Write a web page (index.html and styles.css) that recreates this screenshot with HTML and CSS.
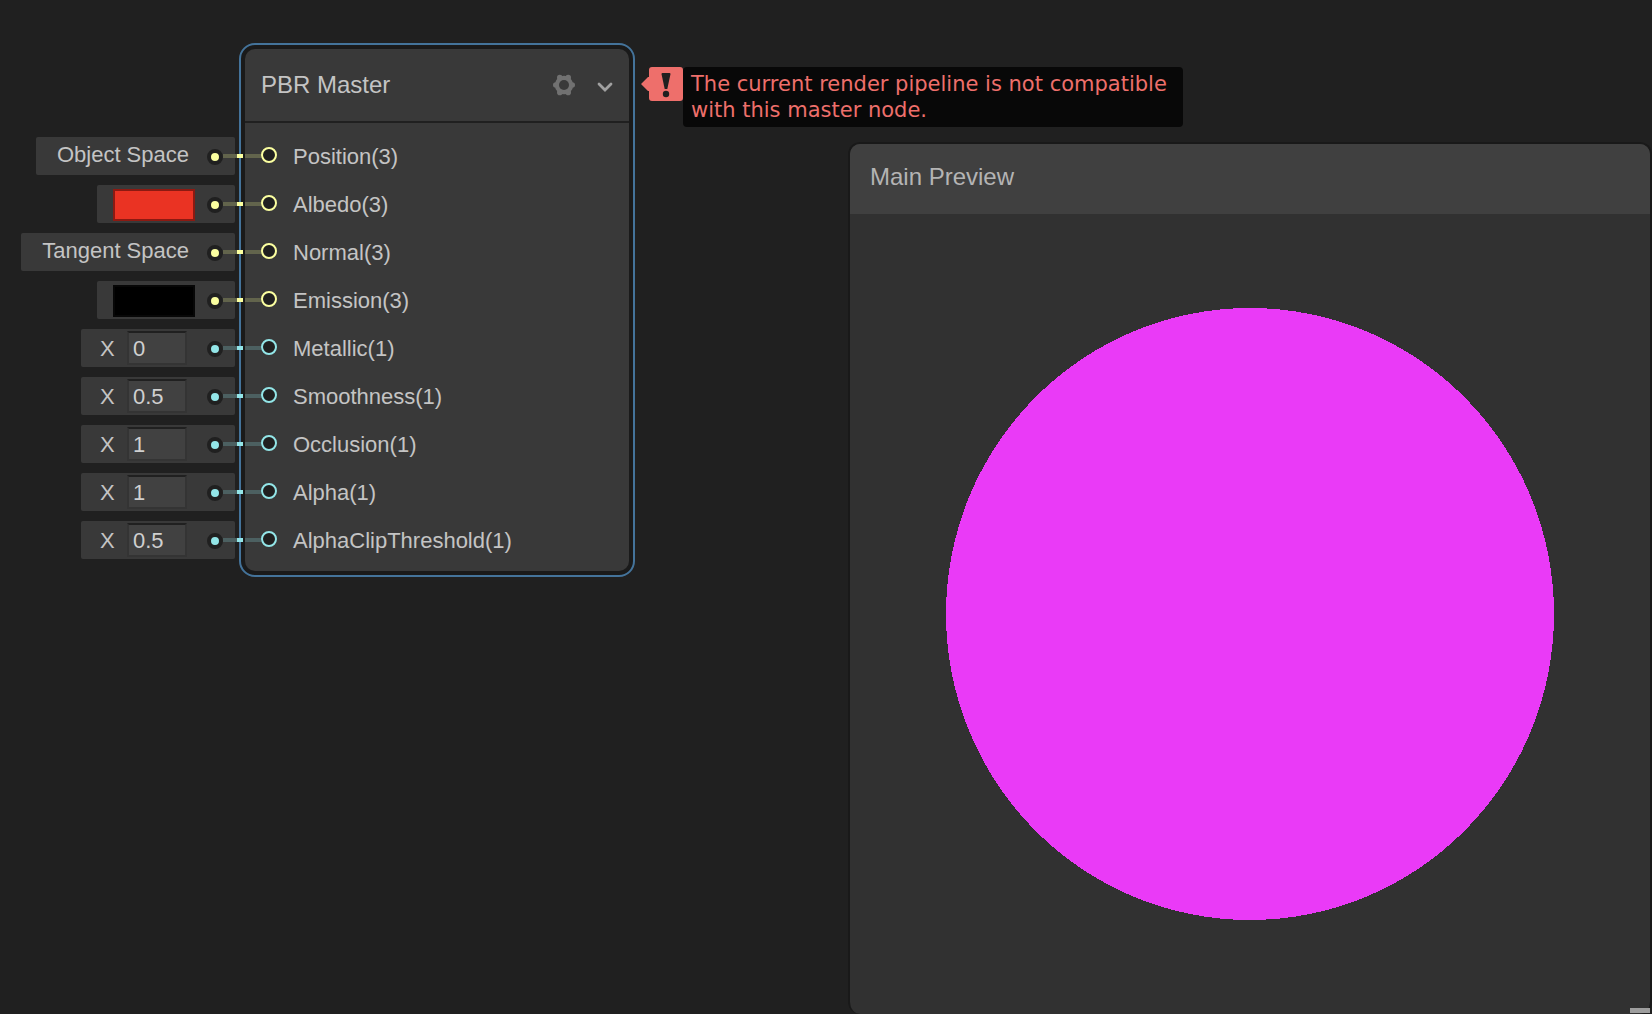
FILE: index.html
```html
<!DOCTYPE html>
<html lang="en">
<head>
<meta charset="utf-8">
<title>Shader Graph</title>
<link rel="stylesheet" href="styles.css">
</head>
<body>
<main class="canvas">
  <section class="node" aria-label="PBR Master">
    <header class="node-header">
      <h1 class="node-title">PBR Master</h1>
      <button class="icon-button" type="button" aria-label="Settings">
        <svg width="22" height="22" viewBox="0 0 22 22"><g fill="#717171"><circle cx="11" cy="11" r="9.200"/><circle cx="2.800" cy="11" r="2.800"/><circle cx="19.200" cy="11" r="2.800"/><circle cx="6.800" cy="3.600" r="2.800"/><circle cx="15.200" cy="3.600" r="2.800"/><circle cx="6.800" cy="18.400" r="2.800"/><circle cx="15.200" cy="18.400" r="2.800"/></g><circle cx="11" cy="11" r="5" fill="#393939"/></svg>
      </button>
      <button class="icon-button" type="button" aria-label="Collapse">
        <svg width="16" height="22" viewBox="0 0 16 22"><path d="M2 10L8 16L14 10" fill="none" stroke="#a0a0a0" stroke-width="2.8" stroke-linecap="round" stroke-linejoin="miter"/></svg>
      </button>
    </header>
    <ul class="ports">
      <li class="port vector"><div class="chip"><button class="space" type="button">Object Space</button><i class="dot"></i></div><i class="wire"></i><i class="ring"></i><span class="port-name">Position(3)</span></li>
      <li class="port vector"><div class="chip"><button class="swatch red" type="button" aria-label="Albedo color"></button><i class="dot"></i></div><i class="wire"></i><i class="ring"></i><span class="port-name">Albedo(3)</span></li>
      <li class="port vector"><div class="chip"><button class="space" type="button">Tangent Space</button><i class="dot"></i></div><i class="wire"></i><i class="ring"></i><span class="port-name">Normal(3)</span></li>
      <li class="port vector"><div class="chip"><button class="swatch black" type="button" aria-label="Emission color"></button><i class="dot"></i></div><i class="wire"></i><i class="ring"></i><span class="port-name">Emission(3)</span></li>
      <li class="port scalar"><div class="chip"><label class="axis" for="metallic">X</label><input class="value" id="metallic" type="text" value="0"><i class="dot"></i></div><i class="wire"></i><i class="ring"></i><span class="port-name">Metallic(1)</span></li>
      <li class="port scalar"><div class="chip"><label class="axis" for="smoothness">X</label><input class="value" id="smoothness" type="text" value="0.5"><i class="dot"></i></div><i class="wire"></i><i class="ring"></i><span class="port-name">Smoothness(1)</span></li>
      <li class="port scalar"><div class="chip"><label class="axis" for="occlusion">X</label><input class="value" id="occlusion" type="text" value="1"><i class="dot"></i></div><i class="wire"></i><i class="ring"></i><span class="port-name">Occlusion(1)</span></li>
      <li class="port scalar"><div class="chip"><label class="axis" for="alpha">X</label><input class="value" id="alpha" type="text" value="1"><i class="dot"></i></div><i class="wire"></i><i class="ring"></i><span class="port-name">Alpha(1)</span></li>
      <li class="port scalar"><div class="chip"><label class="axis" for="threshold">X</label><input class="value" id="threshold" type="text" value="0.5"><i class="dot"></i></div><i class="wire"></i><i class="ring"></i><span class="port-name">AlphaClipThreshold(1)</span></li>
    </ul>
  </section>

  <aside class="error" role="alert">
    <svg class="error-badge" width="42" height="34" viewBox="0 0 42 34" aria-hidden="true"><path d="M0 17L7 10H8V3Q8 0 11 0H39Q42 0 42 3V31Q42 34 39 34H11Q8 34 8 31V24H7Z" fill="#ee6f6b"/><path d="M20.500 7Q20.500 6 21.500 6H28.500Q29.500 6 29.500 7L26.300 22H23.700Z" fill="#202020"/><circle cx="25" cy="27" r="3.200" fill="#202020"/></svg>
    <p class="error-text">The current render pipeline is not compatible<br>with this master node.</p>
  </aside>

  <section class="preview" aria-label="Main Preview">
    <header class="preview-header"><h2 class="preview-title">Main Preview</h2></header>
    <div class="preview-body">
      <svg class="sphere" viewBox="0 0 608 612" role="img" aria-label="Preview sphere"><ellipse cx="304" cy="306" rx="304" ry="306" fill="#ea3af7" shape-rendering="crispEdges"/></svg>
    </div>
    <i class="grip"></i>
  </section>
</main>
</body>
</html>
```
FILE: styles.css
```css
* { box-sizing: border-box; }

body {
  margin: 0;
  background: #202020;
  color: #c4c4c4;
  font: 22px/26px "Liberation Sans", Arial, sans-serif;
}

h1, h2, p, ul { margin: 0; padding: 0; font: inherit; }
ul { list-style: none; }
button { font: inherit; color: inherit; border: 0; padding: 0; background: none; }

.canvas {
  position: relative;
  min-height: 100vh;
  overflow: hidden;
}

/* Master node */
.node {
  position: absolute;
  left: 239px;
  top: 43px;
  width: 396px;
  padding: 4px;
  border: 2px solid #44739a;
  border-radius: 16px;
  background: #1a1a1a;
}

.node-header {
  display: flex;
  align-items: center;
  gap: 22px;
  height: 74px;
  padding: 0 16px;
  border-bottom: 2px solid #202020;
  border-radius: 10px 10px 0 0;
  background: #393939;
}

.node-title { flex: 1; font-size: 24px; }
.icon-button { display: flex; }

.ports {
  display: flex;
  flex-direction: column;
  gap: 10px;
  padding: 14px 0 12px;
  border-radius: 0 0 10px 10px;
  background: #393939;
}

.port {
  position: relative;
  display: flex;
  align-items: center;
  height: 38px;
  padding-left: 16px;
}

.vector { --port: #fbffa0; --wire: #62644c; }
.scalar { --port: #93e6e8; --wire: #4c6061; }

.ring {
  width: 16px;
  height: 16px;
  margin-bottom: 2px;
  border: 2px solid var(--port);
  border-radius: 50%;
  background: #202020;
}

.port-name { padding: 2px 0 0 16px; }

/* Inline value editors hang off the left edge of the node */
.chip {
  position: absolute;
  right: calc(100% + 10px);
  top: 0;
  display: flex;
  align-items: center;
  height: 38px;
  padding: 2px 12px 0 16px;
  border-radius: 2px;
  background: #393939;
  white-space: nowrap;
}

.dot {
  width: 16px;
  height: 16px;
  border: 4px solid #202020;
  border-radius: 50%;
  background: var(--port);
}

.wire {
  position: absolute;
  left: -22px;
  top: 17px;
  width: 38px;
  height: 4px;
  background: linear-gradient(90deg, var(--wire) 14px, var(--port) 14px 20px, #1a1a1a 20px 22px, var(--wire) 22px);
}

.space {
  align-self: flex-start;
  padding: 0 18px 0 5px;
  line-height: 32px;
}

.swatch {
  width: 82px;
  height: 32px;
  margin-right: 12px;
  border: 2px solid #8c1a12;
}
.red { background: #ea3323; }
.black { background: #000; border-color: #070707; }

.axis { width: 30px; padding-left: 3px; }

.value {
  align-self: flex-start;
  width: 60px;
  height: 34px;
  margin-right: 20px;
  padding: 1px 4px 0;
  border: 2px solid #343434;
  border-top-color: #202020;
  background: #414141;
  color: #d0d0d0;
  font: inherit;
}

/* Error callout */
.error {
  position: absolute;
  left: 641px;
  top: 67px;
  display: flex;
  align-items: flex-start;
}

.error-text {
  padding: 4px 16px 4px 8px;
  border-radius: 4px;
  background: #080808;
  color: #ee6f6b;
  font: 21px/26px "DejaVu Sans", sans-serif;
  white-space: nowrap;
}

/* Preview window */
.preview {
  position: absolute;
  left: 848px;
  right: 0;
  top: 142px;
  bottom: 0;
  display: flex;
  flex-direction: column;
  border: 2px solid #191919;
  border-bottom: 0;
  border-radius: 12px;
  background: #313131;
}

.preview-header {
  height: 70px;
  padding: 20px;
  border-radius: 10px 10px 0 0;
  background: #404040;
}
.preview-title { color: #b4b4b4; font-size: 24px; }

.preview-body {
  flex: 1;
  display: flex;
  align-items: center;
  justify-content: center;
}
.sphere { width: 76%; }

.grip {
  position: absolute;
  right: 0;
  bottom: 1px;
  width: 20px;
  height: 5px;
  background: #9e9e9e;
}
```
